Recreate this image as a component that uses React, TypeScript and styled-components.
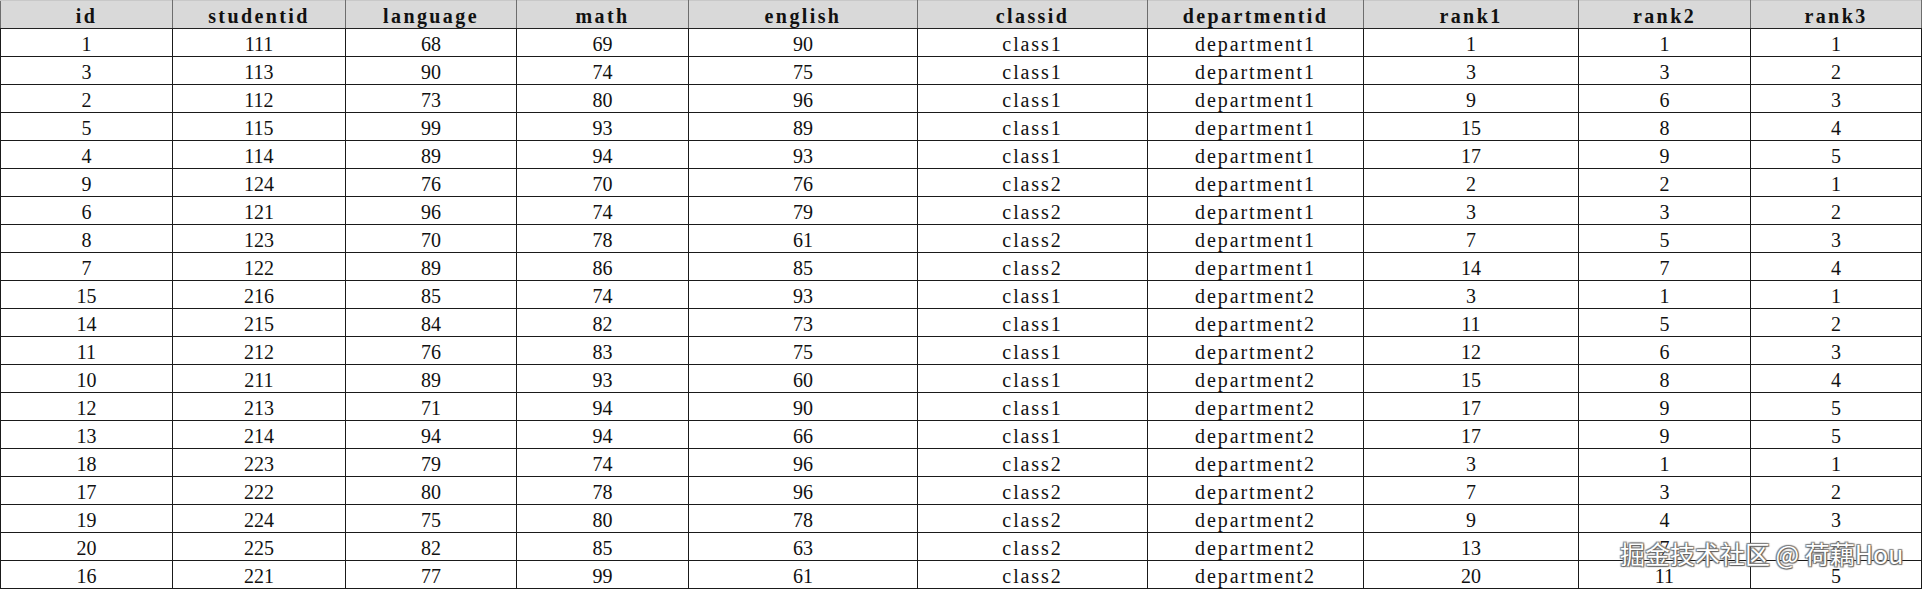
import styled, { createGlobalStyle } from 'styled-components';

const GlobalStyle = createGlobalStyle`
  html, body {
    margin: 0;
    padding: 0;
    background: #ffffff;
  }
`;

const Page = styled.div`
  position: relative;
  width: 1923px;
  height: 589px;
  overflow: hidden;
  background: #ffffff;
`;

const Table = styled.table`
  border-collapse: collapse;
  table-layout: fixed;
  width: 1921px;
  font-family: 'Liberation Serif', 'Times New Roman', serif;
  color: #111111;
`;

const HeadCell = styled.th`
  height: 25px;
  padding: 2px 0 0;
  background: #d9d9d9;
  border: 1px solid #6e6e6e;
  border-top-color: #c8c8c8;
  border-bottom-color: #222222;
  font-size: 20px;
  font-weight: 700;
  letter-spacing: 2.4px;
  line-height: 22px;
  text-align: center;
  vertical-align: middle;
`;

const Cell = styled.td<{ $text?: boolean }>`
  height: 24px;
  padding: 3px 0 0;
  border: 1px solid #1a1a1a;
  font-size: 20px;
  font-weight: 400;
  letter-spacing: ${(p) => (p.$text ? '1.9px' : '0')};
  line-height: 22px;
  text-align: center;
  vertical-align: middle;
  white-space: nowrap;
`;

const Watermark = styled.div`
  position: absolute;
  left: 1620px;
  top: 538px;
  font-family: 'Noto Sans CJK SC', 'Noto Sans', sans-serif;
  font-size: 25px;
  line-height: 30px;
  color: #ffffff;
  white-space: nowrap;
  text-shadow: 0 0 1px #444444, 1px 1px 1px #666666, -1px -1px 1px #888888,
    1px -1px 1px #888888, -1px 1px 1px #888888;
`;

const columns = [
  { key: 'id', width: 172 },
  { key: 'studentid', width: 173 },
  { key: 'language', width: 171 },
  { key: 'math', width: 172 },
  { key: 'english', width: 229 },
  { key: 'classid', width: 230 },
  { key: 'departmentid', width: 216 },
  { key: 'rank1', width: 215 },
  { key: 'rank2', width: 172 },
  { key: 'rank3', width: 171 },
];

const rows: (string | number)[][] = [
  [1, 111, 68, 69, 90, 'class1', 'department1', 1, 1, 1],
  [3, 113, 90, 74, 75, 'class1', 'department1', 3, 3, 2],
  [2, 112, 73, 80, 96, 'class1', 'department1', 9, 6, 3],
  [5, 115, 99, 93, 89, 'class1', 'department1', 15, 8, 4],
  [4, 114, 89, 94, 93, 'class1', 'department1', 17, 9, 5],
  [9, 124, 76, 70, 76, 'class2', 'department1', 2, 2, 1],
  [6, 121, 96, 74, 79, 'class2', 'department1', 3, 3, 2],
  [8, 123, 70, 78, 61, 'class2', 'department1', 7, 5, 3],
  [7, 122, 89, 86, 85, 'class2', 'department1', 14, 7, 4],
  [15, 216, 85, 74, 93, 'class1', 'department2', 3, 1, 1],
  [14, 215, 84, 82, 73, 'class1', 'department2', 11, 5, 2],
  [11, 212, 76, 83, 75, 'class1', 'department2', 12, 6, 3],
  [10, 211, 89, 93, 60, 'class1', 'department2', 15, 8, 4],
  [12, 213, 71, 94, 90, 'class1', 'department2', 17, 9, 5],
  [13, 214, 94, 94, 66, 'class1', 'department2', 17, 9, 5],
  [18, 223, 79, 74, 96, 'class2', 'department2', 3, 1, 1],
  [17, 222, 80, 78, 96, 'class2', 'department2', 7, 3, 2],
  [19, 224, 75, 80, 78, 'class2', 'department2', 9, 4, 3],
  [20, 225, 82, 85, 63, 'class2', 'department2', 13, 7, 4],
  [16, 221, 77, 99, 61, 'class2', 'department2', 20, 11, 5],
];

const App = () => {
  return (
    <Page>
      <GlobalStyle />
      <Table>
        <colgroup>
          {columns.map((c) => (
            <col key={c.key} style={{ width: c.width }} />
          ))}
        </colgroup>
        <thead>
          <tr>
            {columns.map((c) => (
              <HeadCell key={c.key}>{c.key}</HeadCell>
            ))}
          </tr>
        </thead>
        <tbody>
          {rows.map((r, i) => (
            <tr key={i}>
              {r.map((v, j) => (
                <Cell key={j} $text={typeof v === 'string'}>
                  {v}
                </Cell>
              ))}
            </tr>
          ))}
        </tbody>
      </Table>
      <Watermark>掘金技术社区 @ 荷藕Hou</Watermark>
    </Page>
  );
};

export default App;
